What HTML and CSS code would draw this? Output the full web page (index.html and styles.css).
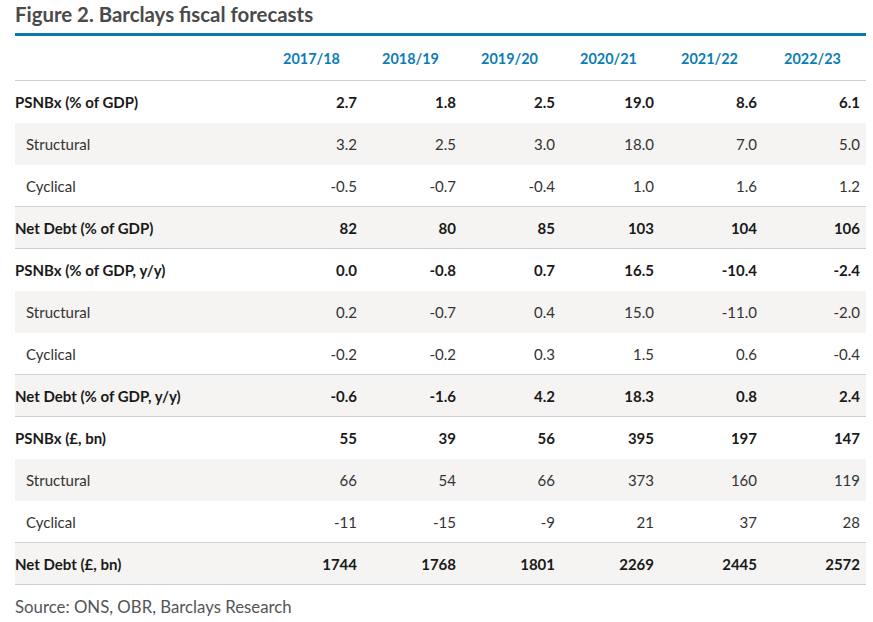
FILE: index.html
```html
<!DOCTYPE html>
<html lang="en">
<head>
<meta charset="utf-8">
<title>Figure 2. Barclays fiscal forecasts</title>
<link rel="stylesheet" href="styles.css">
</head>
<body>
<div class="figure">
  <h1 class="title">Figure 2. Barclays fiscal forecasts</h1>
  <div class="table">
    <div class="row head">
      <div class="cell label"></div>
      <div class="cell">2017/18</div>
      <div class="cell">2018/19</div>
      <div class="cell">2019/20</div>
      <div class="cell">2020/21</div>
      <div class="cell">2021/22</div>
      <div class="cell">2022/23</div>
    </div>

    <div class="row main">
      <div class="cell label">PSNBx (% of GDP)</div>
      <div class="cell">2.7</div><div class="cell">1.8</div><div class="cell">2.5</div><div class="cell">19.0</div><div class="cell">8.6</div><div class="cell">6.1</div>
    </div>
    <div class="row sub shade">
      <div class="cell label">Structural</div>
      <div class="cell">3.2</div><div class="cell">2.5</div><div class="cell">3.0</div><div class="cell">18.0</div><div class="cell">7.0</div><div class="cell">5.0</div>
    </div>
    <div class="row sub ruled">
      <div class="cell label">Cyclical</div>
      <div class="cell">-0.5</div><div class="cell">-0.7</div><div class="cell">-0.4</div><div class="cell">1.0</div><div class="cell">1.6</div><div class="cell">1.2</div>
    </div>
    <div class="row main shade ruled">
      <div class="cell label">Net Debt (% of GDP)</div>
      <div class="cell">82</div><div class="cell">80</div><div class="cell">85</div><div class="cell">103</div><div class="cell">104</div><div class="cell">106</div>
    </div>

    <div class="row main">
      <div class="cell label">PSNBx (% of GDP, y/y)</div>
      <div class="cell">0.0</div><div class="cell">-0.8</div><div class="cell">0.7</div><div class="cell">16.5</div><div class="cell">-10.4</div><div class="cell">-2.4</div>
    </div>
    <div class="row sub shade">
      <div class="cell label">Structural</div>
      <div class="cell">0.2</div><div class="cell">-0.7</div><div class="cell">0.4</div><div class="cell">15.0</div><div class="cell">-11.0</div><div class="cell">-2.0</div>
    </div>
    <div class="row sub ruled">
      <div class="cell label">Cyclical</div>
      <div class="cell">-0.2</div><div class="cell">-0.2</div><div class="cell">0.3</div><div class="cell">1.5</div><div class="cell">0.6</div><div class="cell">-0.4</div>
    </div>
    <div class="row main shade ruled">
      <div class="cell label">Net Debt (% of GDP, y/y)</div>
      <div class="cell">-0.6</div><div class="cell">-1.6</div><div class="cell">4.2</div><div class="cell">18.3</div><div class="cell">0.8</div><div class="cell">2.4</div>
    </div>

    <div class="row main">
      <div class="cell label">PSNBx (£, bn)</div>
      <div class="cell">55</div><div class="cell">39</div><div class="cell">56</div><div class="cell">395</div><div class="cell">197</div><div class="cell">147</div>
    </div>
    <div class="row sub shade">
      <div class="cell label">Structural</div>
      <div class="cell">66</div><div class="cell">54</div><div class="cell">66</div><div class="cell">373</div><div class="cell">160</div><div class="cell">119</div>
    </div>
    <div class="row sub ruled">
      <div class="cell label">Cyclical</div>
      <div class="cell">-11</div><div class="cell">-15</div><div class="cell">-9</div><div class="cell">21</div><div class="cell">37</div><div class="cell">28</div>
    </div>
    <div class="row main shade ruled">
      <div class="cell label">Net Debt (£, bn)</div>
      <div class="cell">1744</div><div class="cell">1768</div><div class="cell">1801</div><div class="cell">2269</div><div class="cell">2445</div><div class="cell">2572</div>
    </div>
  </div>
  <p class="source">Source: ONS, OBR, Barclays Research</p>
</div>
</body>
</html>
```

FILE: styles.css
```css
* { box-sizing: border-box; }

html, body {
  margin: 0;
  padding: 0;
  background: #ffffff;
}

body {
  font-family: Lato, "Liberation Sans", sans-serif;
  color: #1e1e1e;
}

.figure {
  width: 866px;
  padding-left: 15px;
}

.title {
  margin: 0;
  height: 36px;
  padding-top: 2px;
  font-size: 20.4px;
  line-height: 24px;
  font-weight: 700;
  color: #4a4a4a;
  border-bottom: 3px solid #0a78ad;
}

.table {
  display: flex;
  flex-direction: column;
}

.row {
  display: grid;
  grid-template-columns: 249px 99px 99px 99px 99px 103px 103px;
  height: 42px;
  align-items: center;
  font-size: 15px;
}

.row.head {
  height: 45px;
  border-bottom: 1px solid #cfcfcf;
  color: #0b7db6;
  font-weight: 700;
  font-size: 14.4px;
}

.row.head .cell {
  text-align: center;
  padding: 0 6px 0 2px;
}

.cell {
  text-align: right;
  padding-right: 6px;
}

.cell.label {
  text-align: left;
  padding: 0;
}

.row.main {
  font-weight: 700;
  color: #1a1a1a;
}

.row.sub {
  font-weight: 400;
  color: #333333;
}

.row.sub .cell.label {
  padding-left: 11px;
}

.row.shade {
  background: #f5f4f2;
}

.row.ruled {
  border-bottom: 1px solid #cfcfcf;
}

.source {
  margin: 11px 0 0;
  font-size: 16.8px;
  line-height: 22px;
  color: #555555;
}
```
